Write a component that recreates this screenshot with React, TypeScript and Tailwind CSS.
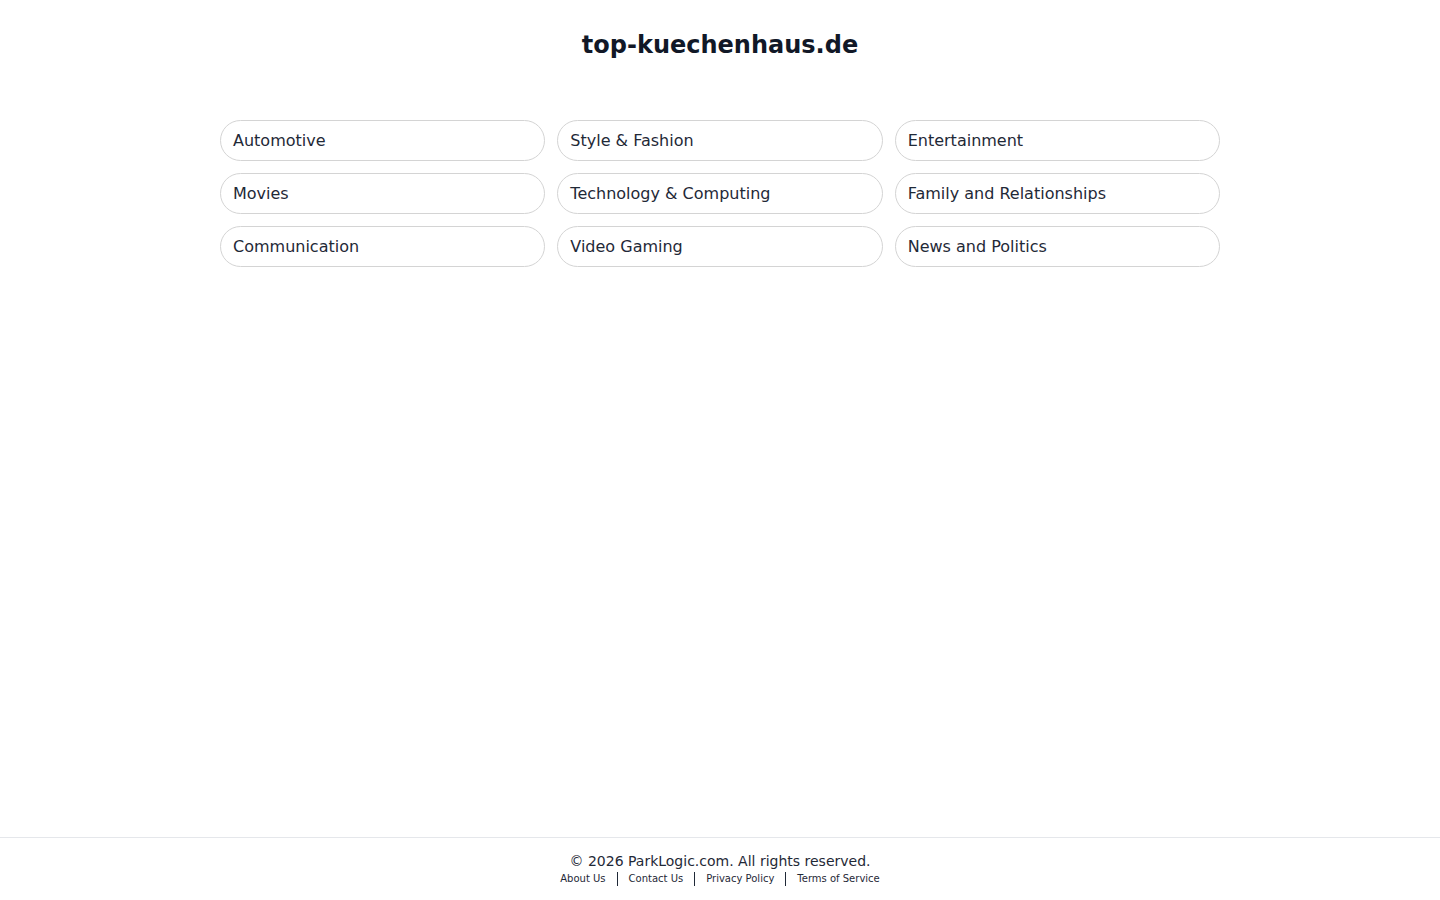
const categories = [
  'Automotive',
  'Style & Fashion',
  'Entertainment',
  'Movies',
  'Technology & Computing',
  'Family and Relationships',
  'Communication',
  'Video Gaming',
  'News and Politics',
];

const links = ['About Us', 'Contact Us', 'Privacy Policy', 'Terms of Service'];

export default function App() {
  return (
    <div className="flex min-h-screen flex-col bg-white font-['DejaVu_Sans',sans-serif] text-[#111827]">
      <header className="pt-[29px] text-center">
        <h1 className="text-2xl leading-8 font-bold">top-kuechenhaus.de</h1>
      </header>

      <main className="mx-auto mt-[59px] grid w-[1000px] grid-cols-3 gap-3">
        {categories.map((c) => (
          <a
            key={c}
            href="#"
            className="flex h-[41px] items-center rounded-full border border-[#d4d4d4] px-[12px] text-base text-[#1f2937]"
          >
            {c}
          </a>
        ))}
      </main>

      <footer className="mt-auto border-t border-[#e5e7eb] pt-[13px] pb-[14px] text-center">
        <p className="text-sm leading-5 text-[#1f2937]">© 2026 ParkLogic.com. All rights reserved.</p>
        <nav className="mt-px flex items-center justify-center text-[10px] leading-[14px] text-[#1f2937]">
          {links.map((l, i) => (
            <span key={l} className="flex items-center">
              {i > 0 && <span className="mx-[11px] h-[14px] w-px bg-[#1f2937]" />}
              <a href="#">{l}</a>
            </span>
          ))}
        </nav>
      </footer>
    </div>
  );
}
